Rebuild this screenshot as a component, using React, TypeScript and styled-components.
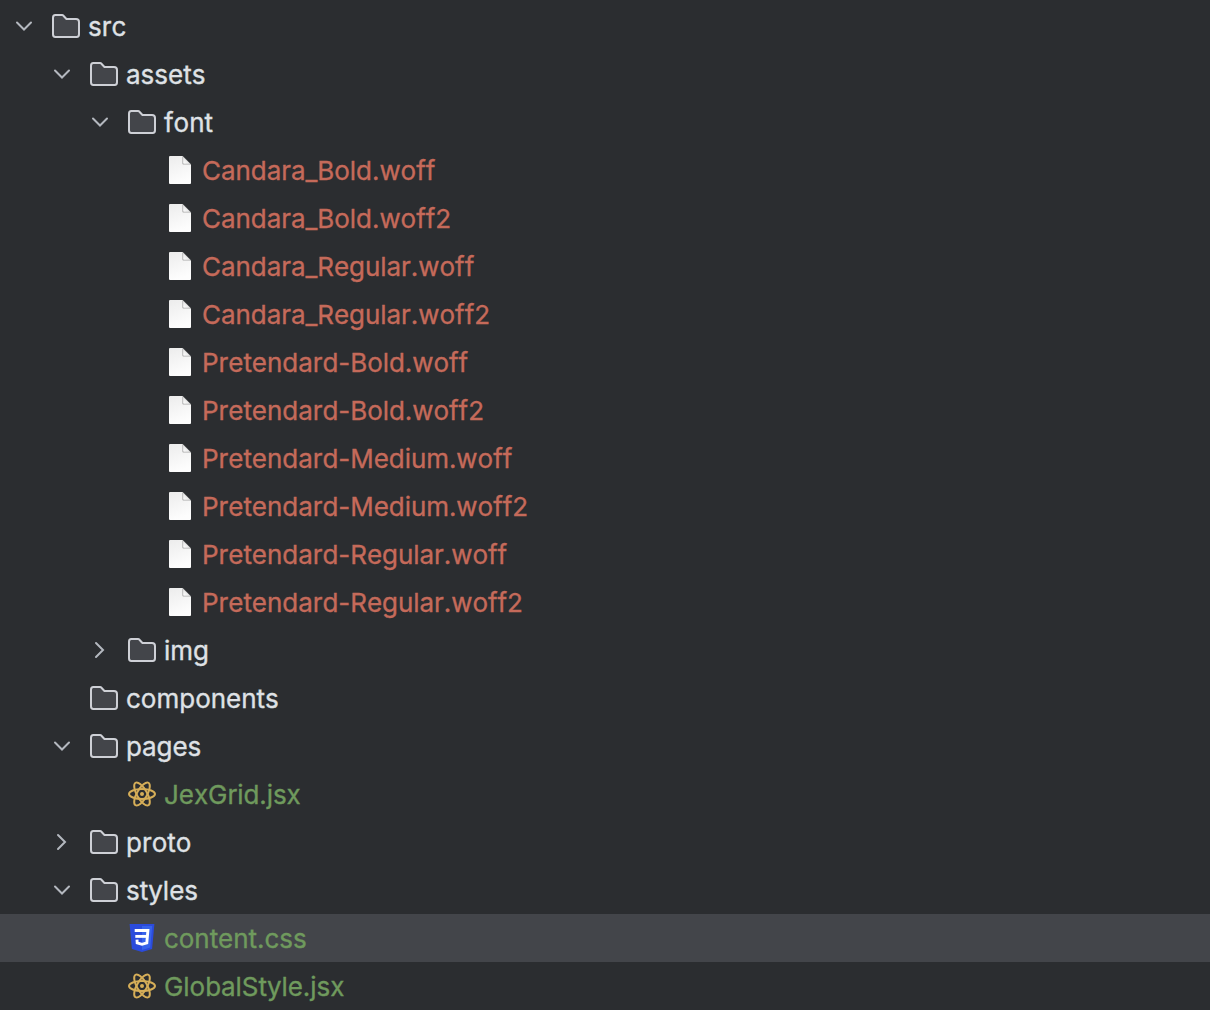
import React, { FunctionComponent } from "react";
import styled, { createGlobalStyle } from "styled-components";

type Kind = "folder" | "font" | "react" | "css";
type Arrow = "open" | "closed";
type Status = "normal" | "unversioned" | "added";

interface Node {
  name: string;
  depth: number;
  kind: Kind;
  arrow?: Arrow;
  status?: Status;
  selected?: boolean;
}

const font = (name: string): Node => ({
  name,
  depth: 3,
  kind: "font",
  status: "unversioned",
});

const nodes: Node[] = [
  { name: "src", depth: 0, kind: "folder", arrow: "open" },
  { name: "assets", depth: 1, kind: "folder", arrow: "open" },
  { name: "font", depth: 2, kind: "folder", arrow: "open" },
  font("Candara_Bold.woff"),
  font("Candara_Bold.woff2"),
  font("Candara_Regular.woff"),
  font("Candara_Regular.woff2"),
  font("Pretendard-Bold.woff"),
  font("Pretendard-Bold.woff2"),
  font("Pretendard-Medium.woff"),
  font("Pretendard-Medium.woff2"),
  font("Pretendard-Regular.woff"),
  font("Pretendard-Regular.woff2"),
  { name: "img", depth: 2, kind: "folder", arrow: "closed" },
  { name: "components", depth: 1, kind: "folder" },
  { name: "pages", depth: 1, kind: "folder", arrow: "open" },
  { name: "JexGrid.jsx", depth: 2, kind: "react", status: "added" },
  { name: "proto", depth: 1, kind: "folder", arrow: "closed" },
  { name: "styles", depth: 1, kind: "folder", arrow: "open" },
  {
    name: "content.css",
    depth: 2,
    kind: "css",
    status: "added",
    selected: true,
  },
  { name: "GlobalStyle.jsx", depth: 2, kind: "react", status: "added" },
];

const colors: Record<Status, string> = {
  normal: "#dfe1e5",
  unversioned: "#c56a5a",
  added: "#6f9a5d",
};

const App: FunctionComponent = () => (
  <>
    <GlobalStyle />
    <Tree role="tree">
      {nodes.map((node) => (
        <TreeRow key={`${node.depth}-${node.name}`} node={node} />
      ))}
    </Tree>
  </>
);

export default App;

const TreeRow: FunctionComponent<{ node: Node }> = ({ node }) => (
  <Row role="treeitem" $depth={node.depth} $selected={node.selected}>
    <Toggle>{node.arrow && <Chevron arrow={node.arrow} />}</Toggle>
    <FileIcon kind={node.kind} />
    <Label $status={node.status || "normal"}>{node.name}</Label>
  </Row>
);

const Chevron: FunctionComponent<{ arrow: Arrow }> = ({ arrow }) => (
  <Icon viewBox="0 0 16 16">
    <path
      d={arrow === "open" ? "M4.5 6.25L8 9.75L11.5 6.25" : "M6 11.5L9.5 8L6 4.5"}
      fill="none"
      stroke="#b4b8bf"
      strokeLinecap="round"
    />
  </Icon>
);

const FileIcon: FunctionComponent<{ kind: Kind }> = ({ kind }) => {
  if (kind === "folder") {
    return (
      <Icon viewBox="0 0 16 16">
        <path
          d="M8.106 4.346L8.253 4.5H13C13.828 4.5 14.5 5.172 14.5 6V12.133C14.5 12.953 13.932 13.5 13.367 13.5H2.633C2.068 13.5 1.5 12.953 1.5 12.133V3.867C1.5 3.047 2.068 2.5 2.633 2.5H6.122C6.258 2.5 6.388 2.556 6.483 2.654L8.106 4.346Z"
          fill="#43454a"
          stroke="#ced0d6"
        />
      </Icon>
    );
  }

  if (kind === "react") {
    return (
      <Icon viewBox="0 0 32 32">
        <g fill="none" stroke="#d6ae58" strokeWidth="2">
          <ellipse cx="16" cy="16" rx="13" ry="5" />
          <ellipse cx="16" cy="16" rx="13" ry="5" transform="rotate(60 16 16)" />
          <ellipse cx="16" cy="16" rx="13" ry="5" transform="rotate(120 16 16)" />
        </g>
        <circle cx="16" cy="16" r="2" fill="#d6ae58" />
      </Icon>
    );
  }

  if (kind === "css") {
    return (
      <Icon viewBox="0 0 32 32">
        <path d="M3.6 2H28.4L26.1 27L16 30L5.9 27Z" fill="#2b4bdc" />
        <path d="M16 4H26.2L24.3 25.5L16 28Z" fill="#3763ea" />
        <path
          d="M8.7 8.5H21.9L20.8 20.8L16 22.3L11.2 20.8L11 17.6"
          fill="none"
          stroke="#fff"
          strokeWidth="2.9"
        />
        <path d="M9.3 14.4H21.2" fill="none" stroke="#fff" strokeWidth="2.9" />
      </Icon>
    );
  }

  return (
    <Icon viewBox="0 0 32 32">
      <defs>
        <linearGradient id="paper" x1="0" y1="0" x2="0.3" y2="1">
          <stop offset="0" stopColor="#ececec" />
          <stop offset="1" stopColor="#fdfdfd" />
        </linearGradient>
        <linearGradient id="fold" x1="0" y1="1" x2="0.5" y2="0.5">
          <stop offset="0" stopColor="#ffffff" />
          <stop offset="1" stopColor="#e9e9e9" />
        </linearGradient>
      </defs>
      <path
        d="M6 2H18.6L27 10.4V29Q27 30 26 30H6Q5 30 5 29V3Q5 2 6 2Z"
        fill="url(#paper)"
      />
      <path d="M18.4 2L27 10.6H19.4Q18.4 10.6 18.4 9.6Z" fill="#a9a9a9" />
      <path d="M19.2 3L26 9.7H20Q19.2 9.7 19.2 8.9Z" fill="url(#fold)" />
    </Icon>
  );
};

const GlobalStyle = createGlobalStyle`
  body {
    margin: 0;
    background-color: #2b2d30;
  }
`;

const Tree = styled.div`
  box-sizing: border-box;
  height: 1010px;
  padding-top: 2px;
  overflow: hidden;
  background-color: #2b2d30;
  font-family: Inter, sans-serif;
  font-size: 26px;
  font-kerning: none;
  font-optical-sizing: none;
  line-height: 48px;
`;

const Row = styled.div<{ $depth: number; $selected?: boolean }>`
  display: flex;
  align-items: center;
  height: 48px;
  padding-left: ${({ $depth }) => 8 + $depth * 38}px;
  background-color: ${({ $selected }) =>
    $selected ? "#43454a" : "transparent"};
`;

const Toggle = styled.span`
  display: flex;
  flex-shrink: 0;
  width: 32px;
  margin-right: 10px;
`;

const Icon = styled.svg`
  display: block;
  flex-shrink: 0;
  width: 32px;
  height: 32px;
`;

const Label = styled.span<{ $status: Status }>`
  margin-left: 6px;
  padding-top: 2px;
  color: ${({ $status }) => colors[$status]};
  letter-spacing: ${({ $status }) =>
    $status === "normal" ? "normal" : "-0.05px"};
  white-space: nowrap;
  -webkit-text-stroke: 0.35px currentColor;
`;
